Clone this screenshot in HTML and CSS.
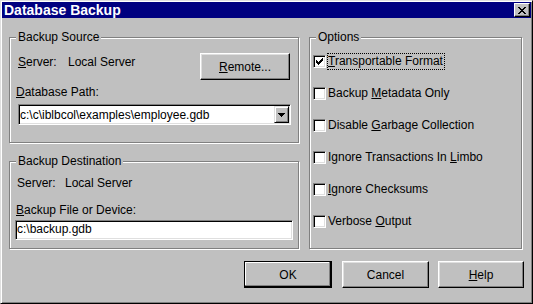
FILE: index.html
```html
<!DOCTYPE html>
<html lang="en">
<head>
  <meta charset="UTF-8">
  <title>Database Backup</title>
  <link rel="stylesheet" href="styles.css">
</head>
<body>
  <div class="window">
    <div class="titlebar">
      <span class="title">Database Backup</span>
      <span class="close-btn">
        <svg width="8" height="7" viewBox="0 0 8 7"><path d="M0 0h2v1H0z M6 0h2v1H6z M1 1h2v1H1z M5 1h2v1H5z M2 2h4v1H2z M3 3h2v1H3z M2 4h4v1H2z M1 5h2v1H1z M5 5h2v1H5z M0 6h2v1H0z M6 6h2v1H6z" fill="#000"/></svg>
      </span>
    </div>

    <div class="main">
      <div class="left-col">
        <div class="group source">
          <span class="legend">Backup Source</span>
          <div class="server-row">
            <div class="kv"><span class="kv-label"><u>S</u>erver:</span><span>Local Server</span></div>
            <div class="btn remote-btn"><span><u>R</u>emote...</span></div>
          </div>
          <div class="field-label path-label"><u>D</u>atabase Path:</div>
          <div class="combo">
            <span class="combo-text">c:\c\iblbcol\examples\employee.gdb</span>
            <span class="combo-btn">
              <svg width="7" height="4" viewBox="0 0 7 4"><path d="M0 0h7v1H0z M1 1h5v1H1z M2 2h3v1H2z M3 3h1v1H3z" fill="#000"/></svg>
            </span>
          </div>
        </div>

        <div class="group dest">
          <span class="legend">Backup Destination</span>
          <div class="kv"><span class="kv-label">Server:</span><span>Local Server</span></div>
          <div class="field-label file-label"><u>B</u>ackup File or Device:</div>
          <div class="text-input">c:\backup.gdb</div>
        </div>
      </div>

      <div class="group options">
        <span class="legend">Options</span>
        <div class="check-row">
          <span class="checkbox">
            <svg width="7" height="7" viewBox="0 0 7 7"><path d="M6 0h1v1H6z M5 1h2v1H5z M0 2h1v1H0z M4 2h3v1H4z M0 3h2v1H0z M3 3h3v1H3z M0 4h5v1H0z M1 5h3v1H1z M2 6h1v1H2z" fill="#000"/></svg>
          </span>
          <span class="check-label focused"><u>T</u>ransportable Format</span>
        </div>
        <div class="check-row">
          <span class="checkbox"></span>
          <span class="check-label">Backup <u>M</u>etadata Only</span>
        </div>
        <div class="check-row">
          <span class="checkbox"></span>
          <span class="check-label">Disable <u>G</u>arbage Collection</span>
        </div>
        <div class="check-row">
          <span class="checkbox"></span>
          <span class="check-label">Ignore Transactions In <u>L</u>imbo</span>
        </div>
        <div class="check-row">
          <span class="checkbox"></span>
          <span class="check-label"><u>I</u>gnore Checksums</span>
        </div>
        <div class="check-row">
          <span class="checkbox"></span>
          <span class="check-label">Verbose <u>O</u>utput</span>
        </div>
      </div>
    </div>

    <div class="buttons">
      <div class="btn default ok-btn"><span>OK</span></div>
      <div class="btn cancel-btn"><span>Cancel</span></div>
      <div class="btn help-btn"><span><u>H</u>elp</span></div>
    </div>
  </div>
</body>
</html>
```

FILE: styles.css
```css
body {
  margin: 0;
  background: #c0c0c0;
  font-family: "Liberation Sans", Arial, sans-serif;
  font-size: 12px;
  line-height: 14px;
  color: #000;
}
u { text-decoration: underline; }

.window {
  box-sizing: border-box;
  width: 533px; height: 304px;
  padding: 1px;
  background: #c0c0c0;
  border: 1px solid;
  border-color: #dfdfdf #000 #000 #dfdfdf;
  box-shadow: inset 1px 1px #fff, inset -1px -1px #808080;
}

/* title bar */
.titlebar {
  display: flex; align-items: flex-start;
  height: 16px;
  background: #000080; color: #fff;
}
.title {
  font-weight: bold; font-size: 14px; line-height: 16px;
  padding-left: 2px;
}
.close-btn {
  box-sizing: border-box;
  display: flex; align-items: center; justify-content: center;
  width: 16px; height: 14px;
  margin: 1px 1px 0 auto;
  background: #c0c0c0;
  border: 1px solid;
  border-color: #fff #000 #000 #fff;
  box-shadow: inset -1px -1px #808080;
}

.main { display: flex; padding: 19px 0 0 7px; }
.left-col { display: flex; flex-direction: column; width: 290px; }

/* group boxes */
.group {
  position: relative;
  box-sizing: border-box;
  border: 1px solid #808080;
  box-shadow: inset 1px 1px #fff, 1px 1px #fff;
}
.legend {
  position: absolute; top: -8px; left: 6px;
  padding: 0 2px;
  background: #c0c0c0;
  white-space: nowrap;
}

.source { height: 106px; padding: 15px 8px 0 0; }
.dest { height: 88px; margin-top: 18px; padding-top: 14px; }
.options { width: 213px; height: 212px; margin-left: 10px; padding: 17px 0 0 3px; }

.server-row { display: flex; justify-content: space-between; align-items: flex-start; }
.kv { display: flex; white-space: nowrap; }
.source .kv { margin: 2px 0 0 8px; }
.source .kv-label { width: 50px; }
.dest .kv { margin-left: 7px; }
.dest .kv-label { width: 48px; }

.path-label { margin: 5px 0 0 6px; }
.file-label { margin: 13px 0 0 6px; }

/* sunken fields */
.combo, .text-input {
  box-sizing: border-box;
  background: #fff;
  border: 1px solid;
  border-color: #808080 #fff #fff #808080;
  box-shadow: inset 1px 1px #000, inset -1px -1px #dfdfdf;
  white-space: nowrap;
}
.combo {
  display: flex;
  width: 273px; height: 21px;
  margin: 5px 0 0 8px;
  padding: 1px;
}
.combo-text { flex: 1; padding: 2px 0 0 0; }
.combo-btn {
  box-sizing: border-box;
  display: flex; align-items: center; justify-content: center;
  width: 15px; height: 17px;
  background: #c0c0c0;
  border: 1px solid;
  border-color: #dfdfdf #000 #000 #dfdfdf;
  box-shadow: inset 1px 1px #fff, inset -1px -1px #808080;
}
.text-input {
  width: 278px; height: 20px;
  margin: 3px 0 0 5px;
  padding: 1px 0 0 1px;
}

/* check boxes */
.check-row { display: flex; align-items: center; height: 13px; margin-bottom: 19px; }
.checkbox {
  box-sizing: border-box;
  display: flex; align-items: center; justify-content: center;
  width: 13px; height: 13px;
  background: #fff;
  border: 1px solid;
  border-color: #808080 #fff #fff #808080;
  box-shadow: inset 1px 1px #000, inset -1px -1px #dfdfdf;
}
.check-label {
  margin-left: 1px;
  padding: 0 1px 0 0;
  line-height: 15px;
  border: 1px dotted transparent;
  white-space: nowrap;
}
.check-label.focused { border-color: #000; }

/* push buttons */
.btn {
  box-sizing: border-box;
  display: flex; align-items: center; justify-content: center;
  height: 27px;
  background: #c0c0c0;
  border: 1px solid;
  border-color: #fff #000 #000 #fff;
  box-shadow: inset -1px -1px #808080, inset 1px 1px #dfdfdf;
}
.btn.default {
  border-color: #000;
  box-shadow: inset -1px -1px #000, inset -2px -2px #808080, inset 1px 1px #fff;
}
.remote-btn { width: 90px; }

.buttons { display: flex; justify-content: flex-end; margin-top: 12px; padding-right: 7px; }
.ok-btn { width: 88px; }
.cancel-btn { width: 87px; margin-left: 10px; }
.help-btn { width: 86px; margin-left: 9px; }
```
